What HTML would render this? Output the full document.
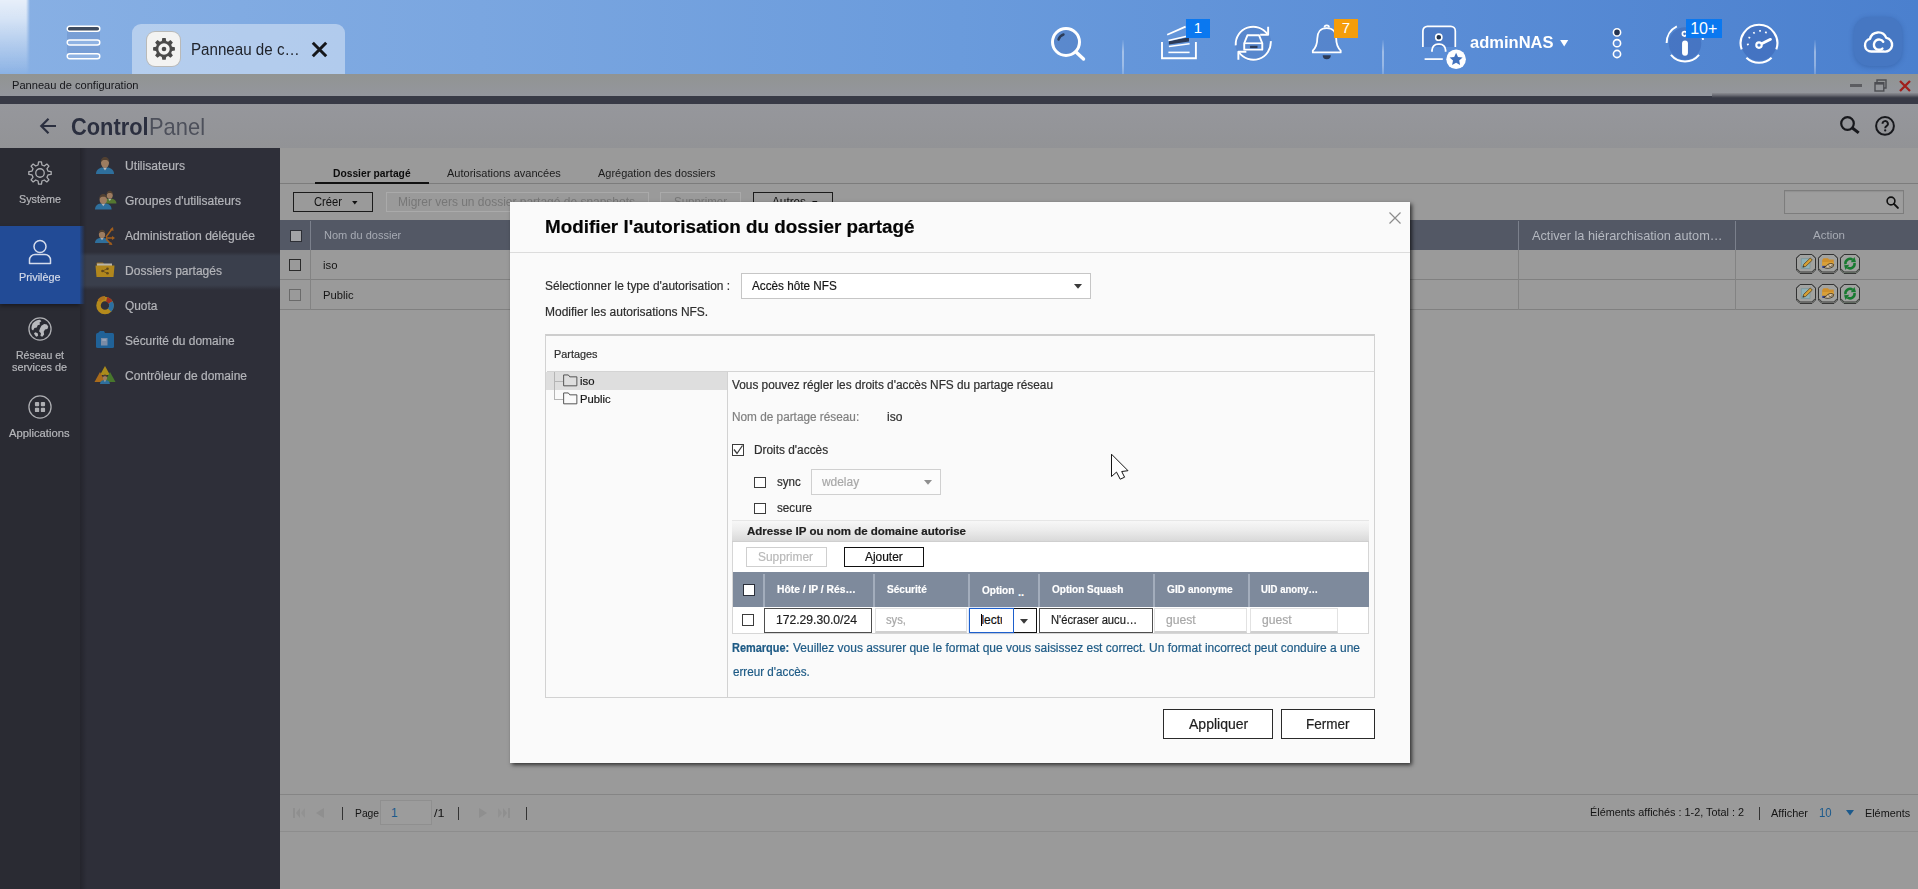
<!DOCTYPE html>
<html lang="fr">
<head>
<meta charset="utf-8">
<title>Panneau de configuration</title>
<style>
*{box-sizing:border-box;margin:0;padding:0}
html,body{width:1918px;height:889px;overflow:hidden;background:#9a9a9a}
body{position:relative;font-family:"Liberation Sans",sans-serif;font-size:12px;color:#222}
.a{position:absolute}
.t{position:absolute;white-space:nowrap;line-height:20px;height:20px}
[id^="m"].t{margin-left:-.6px;-webkit-text-stroke:.2px currentColor}
svg{position:absolute;overflow:visible}
/* top bar */
#topbar{left:0;top:0;width:1918px;height:74px;background:linear-gradient(90deg,#88b0e4 0%,#7aa6e0 25%,#6a9bdc 50%,#5a8dd6 75%,#4b80ce 100%)}
#topglow{left:0;top:0;width:31px;height:74px;background:linear-gradient(180deg,rgba(255,255,255,.80) 0%,rgba(255,255,255,.66) 25%,rgba(255,255,255,.36) 60%,rgba(255,255,255,.10) 92%,rgba(255,255,255,.02) 100%);-webkit-mask-image:linear-gradient(90deg,#000 0,#000 26px,transparent 30px);mask-image:linear-gradient(90deg,#000 0,#000 26px,transparent 30px)}
#tab{left:132px;top:24px;width:213px;height:50px;background:rgba(255,255,255,.40);border-radius:9px 9px 0 0}
#gearbox{left:147px;top:32px;width:33px;height:34px;background:#f3f3f2;border-radius:8px;box-shadow:0 0 0 1px rgba(190,170,140,.55)}
.sep{position:absolute;width:2px;top:40px;height:34px;background:linear-gradient(180deg,rgba(255,255,255,.03),rgba(255,255,255,.42) 35%,rgba(255,255,255,.36) 75%,rgba(255,255,255,.2))}
.badge{position:absolute;top:19.300px;height:18.400px;color:#fff;font-size:15px;line-height:18.400px;text-align:center}
#cloudbtn{left:1854px;top:17px;width:48px;height:49px;border-radius:15px;background:#4677c2;box-shadow:0 1px 5px rgba(30,60,120,.35)}
/* window */
#titlebar{left:0;top:74px;width:1918px;height:22px;background:linear-gradient(180deg,#919492,#94969d)}
#darkbar{left:0;top:96px;width:1918px;height:8px;background:#383a46}
#header{left:0;top:104px;width:1918px;height:44px;background:linear-gradient(180deg,#96979c,#929396)}
#side1{left:0;top:148px;width:80px;height:741px;background:#2a2b33}
#side1sel{left:0;top:226px;width:80px;height:78px;background:#224b96;box-shadow:0 2px 4px rgba(0,0,0,.4)}
#side1fade{left:80px;top:226px;width:5px;height:78px;background:linear-gradient(90deg,rgba(34,75,150,.85),rgba(34,75,150,0))}
#side2sh{left:80px;top:148px;width:7px;height:741px;background:linear-gradient(90deg,rgba(0,0,0,.22),rgba(0,0,0,0))}
#side2{left:80px;top:148px;width:200px;height:741px;background:#2e2f39}
#side2sel{left:80px;top:252px;width:200px;height:38px;background:linear-gradient(180deg,rgba(58,63,76,0) 0,#3a3f4c 4px,#3a3f4c 33px,rgba(58,63,76,0) 38px)}
#content{left:280px;top:148px;width:1638px;height:741px;background:#9a9a9a}
.s1{color:#b6b7bb;font-size:11px;margin-left:-.35px;-webkit-text-stroke:.2px currentColor}
.s2{color:#b3b4b9;font-size:12px;left:125px;margin-left:-.35px;-webkit-text-stroke:.2px currentColor}
/* modal */
#modal{left:510px;top:202px;width:900px;height:561px;background:#fafafa;box-shadow:1.500px 2px 4px 0 rgba(0,0,0,.68)}
/*FIT*/
#tabtxt{transform:scaleX(0.9464);transform-origin:0 50%}
#wtitle{transform:scaleX(1.0088);transform-origin:0 50%}
#hcontrol{transform:scaleX(0.9096);transform-origin:0 50%}
#hpanel{transform:scaleX(0.9122);transform-origin:0 50%}
#s1a{transform:scaleX(0.9814);transform-origin:0 50%}
#s1b{transform:scaleX(0.9861);transform-origin:0 50%}
#s1c{transform:scaleX(0.9570);transform-origin:0 50%}
#s1d{transform:scaleX(0.9885);transform-origin:0 50%}
#s1e{transform:scaleX(1.0198);transform-origin:0 50%}
#s2a{transform:scaleX(1.0108);transform-origin:0 50%}
#s2b{transform:scaleX(1.0027);transform-origin:0 50%}
#s2c{transform:scaleX(1.0097);transform-origin:0 50%}
#s2d{transform:scaleX(1.0029);transform-origin:0 50%}
#s2e{transform:scaleX(0.9907);transform-origin:0 50%}
#s2f{transform:scaleX(0.9966);transform-origin:0 50%}
#s2g{transform:scaleX(0.9994);transform-origin:0 50%}
#tb1{transform:scaleX(0.9332);transform-origin:0 50%}
#tb2{transform:scaleX(1.0006);transform-origin:0 50%}
#tb3{transform:scaleX(0.9965);transform-origin:0 50%}
#bt1{transform:scaleX(0.9328);transform-origin:0 50%}
#bt2{transform:scaleX(0.9980);transform-origin:0 50%}
#bt3{transform:scaleX(0.9574);transform-origin:0 50%}
#bt4{transform:scaleX(0.9802);transform-origin:0 50%}
#gh1{transform:scaleX(1.0020);transform-origin:0 50%}
#gh2{transform:scaleX(0.9801);transform-origin:0 50%}
#gh3{transform:scaleX(1.0465);transform-origin:0 50%}
#gr1{transform:scaleX(1.0311);transform-origin:0 50%}
#gr2{transform:scaleX(1.0177);transform-origin:0 50%}
#pg1{transform:scaleX(0.9376);transform-origin:0 50%}
#pg3{transform:scaleX(1.1429);transform-origin:0 50%}
#pg4{transform:scaleX(0.9870);transform-origin:0 50%}
#pg5{transform:scaleX(0.9975);transform-origin:0 50%}
#pg6{transform:scaleX(0.9506);transform-origin:0 50%}
#pg7{transform:scaleX(0.9834);transform-origin:0 50%}
#mt{transform:scaleX(0.9810);transform-origin:0 50%}
#ml1{transform:scaleX(0.9925);transform-origin:0 50%}
#ml2{transform:scaleX(0.9769);transform-origin:0 50%}
#ml3{transform:scaleX(0.9987);transform-origin:0 50%}
#mp{transform:scaleX(0.9879);transform-origin:0 50%}
#mtr1{transform:scaleX(1.0311);transform-origin:0 50%}
#mtr2{transform:scaleX(1.0177);transform-origin:0 50%}
#mf1{transform:scaleX(0.9852);transform-origin:0 50%}
#mf2{transform:scaleX(0.9828);transform-origin:0 50%}
#mf3{transform:scaleX(1.0037);transform-origin:0 50%}
#mf4{transform:scaleX(0.9882);transform-origin:0 50%}
#mf5{transform:scaleX(0.9641);transform-origin:0 50%}
#mf6{transform:scaleX(0.9931);transform-origin:0 50%}
#mf7{transform:scaleX(0.9742);transform-origin:0 50%}
#mg0{transform:scaleX(1.0455);transform-origin:0 50%}
#mg1{transform:scaleX(0.9953);transform-origin:0 50%}
#mg2{transform:scaleX(0.9939);transform-origin:0 50%}
#mh1{transform:scaleX(0.9352);transform-origin:0 50%}
#mh2{transform:scaleX(0.9166);transform-origin:0 50%}
#mh3{transform:scaleX(0.9115);transform-origin:0 50%}
#mh4{transform:scaleX(0.9114);transform-origin:0 50%}
#mh5{transform:scaleX(0.9252);transform-origin:0 50%}
#mh6{transform:scaleX(0.8715);transform-origin:0 50%}
#md1{transform:scaleX(1.0103);transform-origin:0 50%}
#md2{transform:scaleX(0.9370);transform-origin:0 50%}
#md4{transform:scaleX(0.9325);transform-origin:0 50%}
#md5{transform:scaleX(1.0116);transform-origin:0 50%}
#md6{transform:scaleX(1.0116);transform-origin:0 50%}
#mn1{transform:scaleX(0.9109);transform-origin:0 50%}
#mn2{transform:scaleX(0.9977);transform-origin:0 50%}
#mn3{transform:scaleX(0.9722);transform-origin:0 50%}
#mb1{transform:scaleX(1.0007);transform-origin:0 50%}
#mb2{transform:scaleX(0.9662);transform-origin:0 50%}
#adm{transform:scaleX(0.9713);transform-origin:0 50%}
/*ENDFIT*/
</style>
</head>
<body>
<!-- ===== TOP BAR ===== -->
<div id="topbar" class="a"></div>
<div id="topglow" class="a"></div>
<div id="tab" class="a"></div>
<div id="gearbox" class="a"></div>
<span id="tabtxt" class="t" style="left:191.300px;top:39.500px;font-size:16px;color:#20242c">Panneau de c…</span>

<!-- hamburger -->
<svg style="left:65.500px;top:24.500px" width="35" height="35" viewBox="0 0 35 35">
<rect x="1" y="3" width="33" height="28" fill="rgba(60,90,150,.18)"/>
<rect x="1.200" y="1.200" width="32.600" height="5" rx="2.500" fill="#3f4c60" stroke="#fff" stroke-width="1.400"/>
<rect x="1.200" y="15" width="32.600" height="5" rx="2.500" fill="#8fb2e2" stroke="#fff" stroke-width="1.400"/>
<rect x="1.200" y="28.800" width="32.600" height="5" rx="2.500" fill="#8fb2e2" stroke="#fff" stroke-width="1.400"/>
</svg>
<!-- gear in tab -->
<svg style="left:152px;top:37px" width="24" height="24" viewBox="0 0 24 24"><path fill="#4a4a4a" fill-rule="evenodd" d="M10.300 1h3.400l.5 2.900 1.900.8 2.400-1.700 2.400 2.400-1.700 2.400.8 1.900 2.900.5v3.400l-2.900.5-.8 1.900 1.700 2.400-2.400 2.400-2.400-1.700-1.900.8-.5 2.900h-3.400l-.5-2.900-1.900-.8-2.400 1.700-2.400-2.400 1.700-2.400-.8-1.900-2.900-.5v-3.400l2.900-.5.8-1.900-1.700-2.400 2.400-2.400 2.400 1.700 1.900-.8zM12 6.300a5.700 5.700 0 1 0 0 11.400 5.700 5.700 0 0 0 0-11.400z"/><circle cx="12" cy="12" r="2.300" fill="#4a4a4a"/></svg>
<!-- tab close -->
<svg style="left:311px;top:41px" width="17" height="17" viewBox="0 0 17 17" stroke="#14161a" stroke-width="3" stroke-linecap="butt"><path d="M1.800 1.800l13.400 13.400M15.200 1.800l-13.400 13.400"/></svg>
<!-- search -->
<svg style="left:1049px;top:25px" width="38" height="38" viewBox="0 0 38 38" fill="none"><circle cx="17" cy="17" r="13.500" fill="rgba(70,110,180,.35)" stroke="#fff" stroke-width="3"/><path d="M27 27l7.500 7" stroke="#fff" stroke-width="3.400" stroke-linecap="round"/><path d="M9.500 14.500a8 8 0 0 1 5-5" stroke="#2c3c58" stroke-width="2.400" stroke-linecap="round"/></svg>
<div class="sep" style="left:1122px"></div>
<!-- tasks -->
<svg style="left:1159px;top:26px" width="40" height="36" viewBox="0 0 40 36" fill="none" stroke="#fff" stroke-width="1.900"><path d="M3 16.100v16.100h33.900v-16.100"/><path d="M8.200 8.700l18.400-8.100" stroke-width="1.800"/><path d="M9.900 15.200l20.100-3.900v4.300l-20.100 2.900z" fill="#2b3a57" stroke="none"/><path d="M9.400 14.400l20.600-4.700" stroke-width="1.500"/><path d="M9.900 20.400l20.700-2.700" stroke-width="1.500"/><path d="M9.400 26.400h21.200" stroke-width="1.600"/></svg>
<div class="badge" style="left:1186px;width:24px;background:#0a78f0">1</div>
<!-- sync -->
<svg style="left:1231.800px;top:22px" width="42.500" height="42.500" viewBox="0 0 40 40" fill="none" stroke="#fff" stroke-width="1.800"><circle cx="20" cy="20" r="17" fill="rgba(70,110,180,.30)" stroke="none"/><path d="M3.500 22a16.500 16.500 0 0 1 30-10.500"/><path d="M36.500 18a16.500 16.500 0 0 1-30 10.500"/><path d="M34 4.500v7.500h-7.500" stroke-linejoin="round"/><path d="M6 35.500v-7.500h7.500" stroke-linejoin="round"/><path d="M11.500 20l3-7.500h11l3 7.500v6h-17z" stroke-width="1.800" stroke-linejoin="round"/><path d="M11.500 20h17" stroke-width="1.600"/><path d="M17 23.500h7" stroke="#2b3a57" stroke-width="2.200"/></svg>
<!-- bell -->
<svg style="left:1310.500px;top:25px" width="32.400" height="36" viewBox="0 0 36 40" fill="none" stroke="#fff" stroke-width="2"><path d="M17.500 3.500c-7 0-10.500 5-10.500 11.500 0 8-2.500 11-5 13.500v2h31v-2c-2.500-2.500-5-5.500-5-13.500 0-6.500-3.500-11.500-10.500-11.500z" fill="rgba(70,110,180,.30)" stroke-linejoin="round"/><path d="M13 33.500a4.500 4.500 0 0 0 9 0z" fill="#2b3a57" stroke="none"/><path d="M15 2.800a2.500 2.500 0 0 1 5 0"/></svg>
<div class="badge" style="left:1334px;width:24px;background:#f59d0a">7</div>
<div class="sep" style="left:1382px"></div>
<!-- user -->
<svg style="left:1420px;top:24px" width="48" height="48" viewBox="0 0 48 48" fill="none" stroke="#fff" stroke-width="1.700"><path d="M2.900 22.900v-16a4.500 4.500 0 0 1 4.500-4.500h23.400a4.500 4.500 0 0 1 4.500 4.500v16" fill="rgba(60,100,175,.38)"/><path d="M4.600 35.100h18.200"/><circle cx="18.800" cy="13.200" r="3.100" fill="#22324a" stroke-width="1.600"/><path d="M12 27.800v-1.600a6 6 0 0 1 6-6h1.600a6 6 0 0 1 6 6v1.600" stroke-width="1.800"/><circle cx="36.100" cy="35.300" r="9.800" fill="#fff" stroke="none"/><path d="M36.100 28.800l1.900 4.200 4.600.5-3.400 3.100.9 4.500-4-2.300-4 2.300.9-4.500-3.400-3.100 4.600-.5z" fill="#4272bd" stroke="none"/></svg>
<span id="adm" class="t" style="left:1470.300px;top:31.200px;font-size:17px;line-height:24px;height:24px;font-weight:bold;color:#fff">adminNAS</span>
<svg style="left:1559.600px;top:39.500px" width="8.400" height="6.500" viewBox="0 0 10 8"><path d="M0 0h10l-5 8z" fill="#fff"/></svg>
<!-- dots -->
<svg style="left:1611px;top:27px" width="12" height="32" viewBox="0 0 12 32" stroke="#fff" stroke-width="1.600"><circle cx="6" cy="5.400" r="3.600" fill="#243350"/><circle cx="6" cy="16.200" r="3.600" fill="#5b8bd4"/><circle cx="6" cy="27" r="3.600" fill="#5b8bd4"/></svg>
<!-- info -->
<svg style="left:1663.800px;top:22.200px" width="42" height="42" viewBox="0 0 40 40" fill="none" stroke="#fff" stroke-width="1.900"><circle cx="20" cy="20.500" r="15.500" fill="rgba(50,90,170,.36)" stroke="none"/><path d="M12.200 4.200a17.500 17.500 0 0 0-9.700 15.800"/><path d="M6.600 31.300a17.500 17.500 0 0 0 26.800 0"/><path d="M37.300 17a17.500 17.500 0 0 0-1.300-4"/><circle cx="19.600" cy="11.300" r="2.100" stroke-width="1.600"/><rect x="17.200" y="17.600" width="5.600" height="14.600" rx="2.800" fill="#fff" stroke="none"/></svg>
<div class="badge" style="left:1685.500px;width:36.500px;background:#0a78f0;font-size:16px;line-height:20px">10+</div>
<!-- gauge -->
<svg style="left:1738px;top:22.200px" width="42" height="42" viewBox="0 0 40 40" fill="none" stroke="#fff" stroke-width="2"><circle cx="20" cy="20" r="17" fill="rgba(50,90,170,.38)" stroke="none"/><path d="M3.500 26a17.500 17.500 0 1 1 33 0"/><path d="M8 34a17.500 17.500 0 0 0 24 0"/><path d="M21 21.500l10-5" stroke-width="2.600" stroke-linecap="round"/><circle cx="20" cy="22" r="2.600" fill="#4a7bc8"/><g stroke-width="1.600"><path d="M8.500 21.500l1.800-.3M10 14.500l1.600.8M14.800 9.600l.9 1.500M21 7.500v1.800M27 9.200l-.8 1.500"/></g></svg>
<div class="sep" style="left:1814px"></div>
<!-- cloud -->
<div id="cloudbtn" class="a"></div>
<svg style="left:1860.800px;top:31px" width="32.500" height="24" viewBox="0 0 34 28" fill="none" stroke="#fff" stroke-width="2.800" stroke-linecap="round" stroke-linejoin="round"><path d="M25 24h-15a7.500 7.500 0 0 1-1.500-14.800a10 10 0 0 1 19-1.200a8 8 0 0 1-2.500 16z"/><path d="M24 12.500a6 6 0 1 0-1 8"/></svg>
<!-- ===== WINDOW ===== -->
<div id="titlebar" class="a"></div>
<span id="wtitle" class="t" style="left:12.400px;top:75px;font-size:11px;color:#15161a">Panneau de configuration</span>
<div id="darkbar" class="a"></div>
<div id="header" class="a"></div>
<span id="hcontrol" class="t" style="left:70.700px;top:111.800px;font-size:24px;line-height:30px;height:30px;font-weight:bold;color:#2b2f3f">Control</span>
<span id="hpanel" class="t" style="left:149.200px;top:111.800px;font-size:24px;line-height:30px;height:30px;color:#4d505b">Panel</span>

<svg style="left:39px;top:117px" width="18" height="18" viewBox="0 0 18 18" fill="none" stroke="#2b2f3f" stroke-width="2.200" stroke-linecap="butt" stroke-linejoin="miter"><path d="M17 9h-14.500M9.500 1.800l-7.200 7.200 7.200 7.200"/></svg>
<svg style="left:1839px;top:115px" width="22" height="22" viewBox="0 0 22 22" fill="none" stroke="#17181c" stroke-width="2.200"><circle cx="8.500" cy="8.500" r="6.300"/><path d="M13.400 13l6.300 4.900" stroke-width="3" stroke-linecap="butt"/></svg>
<svg style="left:1874px;top:115px" width="22" height="22" viewBox="0 0 22 22" fill="none" stroke="#17181c" stroke-width="2"><circle cx="11" cy="10.900" r="8.900"/><g transform="translate(11.200 11.200) scale(.84) translate(-11 -11.400)"><path d="M7.800 8.500a3.200 3.200 0 1 1 4.700 2.800c-1 .6-1.500 1.200-1.500 2.500" stroke-width="2.300"/><circle cx="11" cy="16.500" r="1.350" fill="#17181c" stroke="none"/></g></svg>

<!-- window controls -->
<div class="a" style="left:1850px;top:84px;width:12px;height:2.500px;background:#5c5d61"></div>
<svg style="left:1874px;top:79px" width="13" height="13" viewBox="0 0 13 13" fill="none" stroke="#4c4d52"><path d="M3 3v-2h9v8h-2" stroke-width="1.400"/><rect x="1" y="3.700" width="8.800" height="8.300" stroke-width="1.400"/><path d="M1 4.500h8.800" stroke-width="2.200"/></svg>
<svg style="left:1899px;top:80px" width="12" height="12" viewBox="0 0 12 12" stroke="#a11f1c" stroke-width="2.300"><path d="M1 1l10 10M11 1l-10 10"/></svg>
<div class="a" style="left:1712px;top:93px;width:206px;height:5px;background:linear-gradient(180deg,#8b8c91,#6a6b74 45%,#464852 80%,#383a46)"></div>

<div id="side1" class="a"></div>
<div id="side1sel" class="a"></div>
<div id="side2" class="a"></div>
<div id="side2sel" class="a"></div>
<div id="side2sh" class="a"></div>
<div id="side1fade" class="a"></div>
<div id="content" class="a"></div>

<!-- sidebar 1 -->
<svg id="ic-sys" style="left:28px;top:160.700px" width="24" height="24" viewBox="0 0 26 26" fill="none" stroke="#adaeb2" stroke-width="1.400" stroke-linejoin="round"><path d="M10.92 4.35L11.41 0.90L14.59 0.90L15.08 4.35L17.65 5.41L20.43 3.32L22.68 5.57L20.59 8.35L21.65 10.92L25.10 11.41L25.10 14.59L21.65 15.08L20.59 17.65L22.68 20.43L20.43 22.68L17.65 20.59L15.08 21.65L14.59 25.10L11.41 25.10L10.92 21.65L8.35 20.59L5.57 22.68L3.32 20.43L5.41 17.65L4.35 15.08L0.90 14.59L0.90 11.41L4.35 10.92L5.41 8.35L3.32 5.57L5.57 3.32L8.35 5.41Z"/><circle cx="13" cy="13" r="4.600"/></svg>
<span id="s1a" class="t s1" style="left:19px;top:189px">Système</span>
<svg id="ic-priv" style="left:28px;top:239px" width="24" height="26" viewBox="0 0 24 26" fill="none" stroke="#d5dcec" stroke-width="1.5"><circle cx="12" cy="7.5" r="6"/><path d="M1.5 24.500v-3.500a5.500 5.500 0 0 1 5.500-5.500h10a5.500 5.500 0 0 1 5.500 5.500v3.500z" stroke-linejoin="round"/></svg>
<span id="s1b" class="t s1" style="left:19px;top:267px;color:#d3d9e8">Privilège</span>
<svg id="ic-net" style="left:28px;top:316.500px" width="24" height="24" viewBox="0 0 26 26"><circle cx="13" cy="13" r="12" fill="none" stroke="#adaeb2" stroke-width="1.400"/><path d="M5 7c2-2.500 5-4 8-4l1.500 1.500-2 1.500.5 2-2.500 1-1 2.500-2.500.5-1.500 2.500-1.500-1c-.5-2 0-4.500 1-6.500zM14.500 9.500l3-2 3 .5 1.500 2.500-1 2.500-2.500.5-1.500 2.500.500 3-2 2.500-2-1 .5-3-2-2 1-3zM8 16.500l2.500 1 .500 2.500-1.500 1.500c-1.500-1-2.500-2.500-3-4z" fill="#b8b9bd"/></svg>
<span id="s1c" class="t s1" style="left:16px;top:345px">Réseau et</span>
<span id="s1d" class="t s1" style="left:12.500px;top:357px">services de</span>
<svg id="ic-app" style="left:28px;top:395px" width="24" height="24" viewBox="0 0 26 26"><circle cx="13" cy="13" r="12" fill="none" stroke="#adaeb2" stroke-width="1.400"/><rect x="7.500" y="7.500" width="4.600" height="4.600" rx="1" fill="#adaeb2"/><rect x="13.900" y="7.500" width="4.600" height="4.600" rx="1" fill="#adaeb2"/><rect x="7.500" y="13.900" width="4.600" height="4.600" rx="1" fill="#adaeb2"/><rect x="13.900" y="13.900" width="4.600" height="4.600" rx="1" fill="#adaeb2"/></svg>
<span id="s1e" class="t s1" style="left:9.700px;top:423px">Applications</span>
<!-- sidebar 2 -->
<span id="s2a" class="t s2" style="top:156px">Utilisateurs</span>
<span id="s2b" class="t s2" style="top:191px">Groupes d'utilisateurs</span>
<span id="s2c" class="t s2" style="top:226px">Administration déléguée</span>
<span id="s2d" class="t s2" style="top:261px">Dossiers partagés</span>
<span id="s2e" class="t s2" style="top:296px">Quota</span>
<span id="s2f" class="t s2" style="top:331px">Sécurité du domaine</span>
<span id="s2g" class="t s2" style="top:366px">Contrôleur de domaine</span>

<svg style="opacity:.8;left:95px;top:155px" width="20" height="20" viewBox="0 0 20 20"><g transform="translate(1,1) scale(1.0)"><path d="M0 18c0-4 3-6 6-6.500h6c3 .500 6 2.500 6 6.500z" fill="#2f7fb5"/><path d="M7 11.500l2 3 2-3z" fill="#d8d8d8"/><ellipse cx="9" cy="7" rx="4" ry="4.800" fill="#b9906a"/><path d="M4.800 6.500c0-4 2-5.500 4.200-5.500s4.200 1.500 4.200 5.500c-1-2-2-2.500-4.200-2.500s-3.200.500-4.200 2.500z" fill="#5a4530"/></g></svg>
<svg style="opacity:.8;left:95px;top:190px" width="20" height="20" viewBox="0 0 20 20"><g transform="translate(8,0) scale(0.75)"><path d="M0 18c0-4 3-6 6-6.500h6c3 .500 6 2.500 6 6.500z" fill="#5f8a2e"/><path d="M7 11.500l2 3 2-3z" fill="#d8d8d8"/><ellipse cx="9" cy="7" rx="4" ry="4.800" fill="#b9906a"/><path d="M4.800 6.500c0-4 2-5.500 4.200-5.500s4.200 1.500 4.200 5.500c-1-2-2-2.500-4.200-2.500s-3.200.500-4.200 2.500z" fill="#5a4530"/></g><g transform="translate(0,3) scale(0.92)"><path d="M0 18c0-4 3-6 6-6.500h6c3 .500 6 2.500 6 6.500z" fill="#2f7fb5"/><path d="M7 11.500l2 3 2-3z" fill="#d8d8d8"/><ellipse cx="9" cy="7" rx="4" ry="4.800" fill="#b9906a"/><path d="M4.800 6.500c0-4 2-5.500 4.200-5.500s4.200 1.500 4.200 5.500c-1-2-2-2.500-4.200-2.500s-3.200.500-4.200 2.500z" fill="#5a4530"/></g></svg>
<svg style="opacity:.8;left:95px;top:225px" width="20" height="20" viewBox="0 0 20 20"><g transform="translate(0,4) scale(0.78)"><path d="M0 18c0-4 3-6 6-6.500h6c3 .500 6 2.500 6 6.500z" fill="#2f7fb5"/><path d="M7 11.500l2 3 2-3z" fill="#d8d8d8"/><ellipse cx="9" cy="7" rx="4" ry="4.800" fill="#b9906a"/><path d="M4.800 6.500c0-4 2-5.500 4.200-5.500s4.200 1.500 4.200 5.500c-1-2-2-2.500-4.200-2.500s-3.200.500-4.200 2.500z" fill="#5a4530"/></g><g stroke="#c06a14" stroke-width="1.5" fill="none"><path d="M11 12l6-8M11 13h7M11 14l5 5"/></g><path d="M18 2l.500 4-3.500-1.500zM20 13l-3 2v-4zM17.500 20l-4-.500 2.500-2.500z" fill="#c06a14"/></svg>
<svg style="opacity:.8;left:95px;top:260px" width="20" height="20" viewBox="0 0 20 20"><path d="M1 4.500l1-2h6l1.500 2z" fill="#a8781a"/><rect x="2" y="3.500" width="15" height="4" fill="#d9d2c0"/><path d="M.5 5.500h19l-1 11.500h-17z" fill="#cf9a12"/><g fill="#6a4a10"><circle cx="7.500" cy="11" r="1.300"/><circle cx="12.500" cy="8.700" r="1.300"/><circle cx="12.500" cy="13.300" r="1.300"/></g><path d="M7.500 11l5-2.300M7.500 11l5 2.300" stroke="#6a4a10" stroke-width=".8"/></svg>
<svg style="opacity:.8;left:95px;top:295px" width="20" height="20" viewBox="0 0 20 20"><circle cx="10" cy="10.500" r="6.500" fill="none" stroke="#d6a116" stroke-width="4.500"/><path d="M3.900 5.900a7.600 7.600 0 0 1 6.100-3.100" fill="none" stroke="#cf8418" stroke-width="3.400"/><path d="M12.250 2.100A8.700 8.700 0 0 1 17.530 6.150L13.640 8.400A4.200 4.200 0 0 0 11.090 6.440Z" fill="#b8301f"/><path d="M17.530 6.150A8.700 8.700 0 0 1 16.150 16.650L12.970 13.470A4.200 4.200 0 0 0 13.640 8.400Z" fill="#2b7fbd"/></svg>
<svg style="opacity:.8;left:95px;top:330px" width="20" height="20" viewBox="0 0 20 20"><rect x="1" y="3" width="18" height="15" rx="1.500" fill="#1d6fb0"/><path d="M3 3l2-2h4l1 2z" fill="#1d6fb0"/><rect x="6" y="8" width="6.500" height="7.500" fill="#8fa4c2"/><rect x="7.200" y="9.500" width="4" height="1" fill="#d0d8e6"/></svg>
<svg style="opacity:.8;left:95px;top:365px" width="20" height="20" viewBox="0 0 20 20"><path d="M10 1l5 9h-10z" fill="#c9a214"/><path d="M5 7l5.500 10h-11z" fill="#c87a14"/><path d="M15 7l5.500 10h-11z" fill="#4f8a2a"/><g transform="translate(5,9) scale(0.55)"><path d="M0 18c0-4 3-6 6-6.500h6c3 .500 6 2.500 6 6.500z" fill="#2f7fb5"/><path d="M7 11.500l2 3 2-3z" fill="#d8d8d8"/><ellipse cx="9" cy="7" rx="4" ry="4.800" fill="#b9906a"/><path d="M4.800 6.500c0-4 2-5.500 4.200-5.500s4.200 1.500 4.200 5.500c-1-2-2-2.500-4.200-2.500s-3.200.500-4.200 2.500z" fill="#5a4530"/></g></svg>



<!-- tabs -->
<span id="tb1" class="t" style="left:333.300px;top:163px;font-size:11px;font-weight:bold;color:#0c0c0c">Dossier partagé</span>
<span id="tb2" class="t" style="left:447.400px;top:163px;font-size:11px;color:#1c1c1c">Autorisations avancées</span>
<span id="tb3" class="t" style="left:597.800px;top:163px;font-size:11px;color:#1c1c1c">Agrégation des dossiers</span>
<div class="a" style="left:280px;top:183px;width:1638px;height:1px;background:#7c7c7c"></div>
<div class="a" style="left:315px;top:181.500px;width:114px;height:2px;background:#111"></div>
<!-- toolbar -->
<div class="a" style="left:293px;top:192px;width:80px;height:20px;border:1px solid #1b1b1b"></div>
<span id="bt1" class="t" style="left:314px;top:191.500px;font-size:12px;color:#111">Créer</span>
<svg style="left:351.500px;top:200.800px" width="5.600" height="3.400" viewBox="0 0 8 5"><path d="M0 0h8l-4 5z" fill="#111"/></svg>
<div class="a" style="left:385.500px;top:192px;width:263px;height:20px;border:1px solid #aaa"></div>
<span id="bt2" class="t" style="left:398.300px;top:191.500px;font-size:12px;color:#777">Migrer vers un dossier partagé de snapshots</span>
<div class="a" style="left:660px;top:192px;width:81px;height:20px;border:1px solid #aaa"></div>
<span id="bt3" class="t" style="left:674px;top:191.500px;font-size:12px;color:#777">Supprimer</span>
<div class="a" style="left:753px;top:192px;width:80px;height:20px;border:1px solid #1b1b1b"></div>
<span id="bt4" class="t" style="left:771.500px;top:191.500px;font-size:12px;color:#111">Autres</span>
<svg style="left:812px;top:200.800px" width="5.600" height="3.400" viewBox="0 0 8 5"><path d="M0 0h8l-4 5z" fill="#111"/></svg>
<!-- search -->
<div class="a" style="left:1784px;top:190px;width:120px;height:23.500px;border:1px solid #7d7d7d;background:#9d9d9d;box-shadow:inset 0 1px 1px rgba(0,0,0,.08)"></div>
<svg style="left:1886px;top:196px" width="13" height="13" viewBox="0 0 13 13" fill="none" stroke="#111" stroke-width="1.600"><circle cx="5" cy="5" r="3.900"/><path d="M7.900 7.900l4 4" stroke-width="2" stroke-linecap="round"/></svg>
<!-- grid -->
<div class="a" style="left:280px;top:220px;width:1638px;height:30px;background:#535865"></div>
<div class="a" style="left:280px;top:250px;width:1638px;height:30px;border-bottom:1px solid #808080"></div>
<div class="a" style="left:280px;top:280px;width:1638px;height:30px;border-bottom:1px solid #808080"></div>
<div class="a" style="left:309.500px;top:221px;width:1px;height:29px;background:#7b808c"></div>
<div class="a" style="left:309.500px;top:250px;width:1px;height:60px;background:#838383"></div>
<div class="a" style="left:1518px;top:221px;width:1px;height:29px;background:#7b808c"></div>
<div class="a" style="left:1518px;top:250px;width:1px;height:60px;background:#838383"></div>
<div class="a" style="left:1735px;top:221px;width:1px;height:29px;background:#7b808c"></div>
<div class="a" style="left:1735px;top:250px;width:1px;height:60px;background:#838383"></div>
<div class="a" style="left:290px;top:230px;width:12px;height:12px;background:#a2a3a6;border:1px solid #2d2f36"></div>
<div class="a" style="left:289px;top:259px;width:12px;height:12px;border:1px solid #2a2a2a"></div>
<div class="a" style="left:289px;top:289px;width:12px;height:12px;border:1px solid #6a6a6a"></div>
<span id="gh1" class="t" style="left:324.300px;top:225px;font-size:11px;color:#a7abb4">Nom du dossier</span>
<span id="gh2" class="t" style="left:1532.300px;top:225.500px;font-size:13px;color:#b4b8c0">Activer la hiérarchisation autom…</span>
<span id="gh3" class="t" style="left:1812.800px;top:225px;font-size:11px;color:#a7abb4">Action</span>
<span id="gr1" class="t" style="left:323px;top:255px;font-size:11px;color:#141414">iso</span>
<span id="gr2" class="t" style="left:323px;top:285px;font-size:11px;color:#141414">Public</span>
<svg style="left:1796px;top:253.5px" width="20" height="20" viewBox="0 0 20 20"><path d="M4 .5h12l3.500 3.500v12l-3.500 3.500h-12l-3.500-3.500v-12z" fill="#9d9f9b" stroke="#2c2c2c" stroke-width=".9"/><rect x="5" y="5" width="9" height="10.500" fill="#9fb4c8" stroke="#4a5a6a" stroke-width=".7"/><path d="M7 14l1-3.200 6.500-6.800 2 2-6.500 6.800z" fill="#d9a21e" stroke="#5a4210" stroke-width=".6"/></svg><svg style="left:1818px;top:253.5px" width="20" height="20" viewBox="0 0 20 20"><path d="M4 .5h12l3.500 3.500v12l-3.500 3.500h-12l-3.500-3.500v-12z" fill="#9d9f9b" stroke="#2c2c2c" stroke-width=".9"/><path d="M4 6.500l1.500-2h5l1 1.500h4.500v8h-12z" fill="#d8951a"/><path d="M4 9h12.500v5.500h-12.500z" fill="#e0a52a"/><path d="M4 13.500h9v2.500h-9z" fill="#2a3f9a"/><path d="M9 11.500c2-2 5.500-2 7 0l-1.500 2.500c-1.500-1.500-3-1.500-4 0z" fill="#e8d9c0" stroke="#3a2a10" stroke-width=".6"/></svg><svg style="left:1840px;top:253.5px" width="20" height="20" viewBox="0 0 20 20"><path d="M4 .5h12l3.500 3.500v12l-3.500 3.500h-12l-3.500-3.500v-12z" fill="#8fa08f" stroke="#2c2c2c" stroke-width=".9"/><path d="M4.500 10a5.500 5.500 0 0 1 9-4.200l1.800-1.600v5.500h-5.800l2-1.900a3 3 0 0 0-4.500 2.200z" fill="#127a2c"/><path d="M15.500 10a5.500 5.500 0 0 1-9 4.200l-1.800 1.600v-5.500h5.800l-2 1.900a3 3 0 0 0 4.500-2.200z" fill="#127a2c"/></svg><svg style="left:1796px;top:283.5px" width="20" height="20" viewBox="0 0 20 20"><path d="M4 .5h12l3.500 3.500v12l-3.500 3.500h-12l-3.500-3.500v-12z" fill="#9d9f9b" stroke="#2c2c2c" stroke-width=".9"/><rect x="5" y="5" width="9" height="10.500" fill="#9fb4c8" stroke="#4a5a6a" stroke-width=".7"/><path d="M7 14l1-3.200 6.500-6.800 2 2-6.500 6.800z" fill="#d9a21e" stroke="#5a4210" stroke-width=".6"/></svg><svg style="left:1818px;top:283.5px" width="20" height="20" viewBox="0 0 20 20"><path d="M4 .5h12l3.500 3.500v12l-3.500 3.500h-12l-3.500-3.500v-12z" fill="#9d9f9b" stroke="#2c2c2c" stroke-width=".9"/><path d="M4 6.500l1.500-2h5l1 1.500h4.500v8h-12z" fill="#d8951a"/><path d="M4 9h12.500v5.500h-12.500z" fill="#e0a52a"/><path d="M4 13.500h9v2.500h-9z" fill="#2a3f9a"/><path d="M9 11.500c2-2 5.500-2 7 0l-1.500 2.500c-1.500-1.500-3-1.500-4 0z" fill="#e8d9c0" stroke="#3a2a10" stroke-width=".6"/></svg><svg style="left:1840px;top:283.5px" width="20" height="20" viewBox="0 0 20 20"><path d="M4 .5h12l3.500 3.500v12l-3.500 3.500h-12l-3.500-3.500v-12z" fill="#8fa08f" stroke="#2c2c2c" stroke-width=".9"/><path d="M4.500 10a5.500 5.500 0 0 1 9-4.200l1.800-1.600v5.500h-5.800l2-1.900a3 3 0 0 0-4.500 2.200z" fill="#127a2c"/><path d="M15.500 10a5.500 5.500 0 0 1-9 4.200l-1.800 1.600v-5.500h5.800l-2 1.900a3 3 0 0 0 4.500-2.200z" fill="#127a2c"/></svg>
<svg style="left:1796px;top:254px" width="20" height="19" viewBox="0 0 20 19"><path d="M4.200 .5h11.600l3.700 3.700v10.100l-3.700 3.700h-11.600l-3.700-3.700v-10.100z" fill="#a1a2a0" stroke="#2b2b2b" stroke-width=".9"/><rect x="5.200" y="4.800" width="8.800" height="9.800" fill="#8fb3b8" stroke="#6f8f98" stroke-width=".6"/><path d="M6.800 13.300l.9-3 6.600-6.300 2 2.100-6.600 6.300z" fill="#d6a033" stroke="#4a3a18" stroke-width=".7"/><path d="M6.800 13.300l.6-1.800 1.300 1.300z" fill="#3a3a3a"/></svg><svg style="left:1818px;top:254px" width="20" height="19" viewBox="0 0 20 19"><path d="M4.200 .5h11.600l3.700 3.700v10.100l-3.700 3.700h-11.600l-3.700-3.700v-10.100z" fill="#a1a2a0" stroke="#2b2b2b" stroke-width=".9"/><path d="M4.200 6l1.300-1.800h4.500l1 1.300h4.700v6.500h-11.500z" fill="#cf8f2a"/><path d="M4.200 8h11.500v4.500h-11.500z" fill="#d9a038"/><path d="M4.200 11.800h3.300v2.200h-3.300z" fill="#3548a8"/><path d="M5.500 13.200c2.500 1.500 6.500 1.500 9.300-.3l.9-2.400c-1.800-1.300-4.200-1.300-6 .2l-1.600 1.500z" fill="#dcc9a8" stroke="#2a2218" stroke-width=".8"/><path d="M10.500 11.800l2.200.9 2-1.700" fill="none" stroke="#2a2218" stroke-width=".7"/></svg><svg style="left:1840px;top:254px" width="20" height="19" viewBox="0 0 20 19"><path d="M4.200 .5h11.600l3.700 3.700v10.100l-3.700 3.700h-11.600l-3.700-3.700v-10.100z" fill="#a1a2a0" stroke="#2b2b2b" stroke-width=".9"/><g><path d="M5.470 10.300A4.600 4.600 0 0 1 12.640 5.730" fill="none" stroke="#177a30" stroke-width="2.500"/><path d="M14.480 3.110L15.900 8L10.800 8.350z" fill="#177a30"/></g><g transform="rotate(180 10 9.600)"><path d="M5.470 10.300A4.600 4.600 0 0 1 12.640 5.730" fill="none" stroke="#177a30" stroke-width="2.500"/><path d="M14.480 3.110L15.900 8L10.800 8.350z" fill="#177a30"/></g></svg>
<svg style="left:1796px;top:284px" width="20" height="19" viewBox="0 0 20 19"><path d="M4.200 .5h11.600l3.700 3.700v10.100l-3.700 3.700h-11.600l-3.700-3.700v-10.100z" fill="#a1a2a0" stroke="#2b2b2b" stroke-width=".9"/><rect x="5.200" y="4.800" width="8.800" height="9.800" fill="#8fb3b8" stroke="#6f8f98" stroke-width=".6"/><path d="M6.800 13.300l.9-3 6.600-6.300 2 2.100-6.600 6.300z" fill="#d6a033" stroke="#4a3a18" stroke-width=".7"/><path d="M6.800 13.300l.6-1.800 1.300 1.300z" fill="#3a3a3a"/></svg><svg style="left:1818px;top:284px" width="20" height="19" viewBox="0 0 20 19"><path d="M4.200 .5h11.600l3.700 3.700v10.100l-3.700 3.700h-11.600l-3.700-3.700v-10.100z" fill="#a1a2a0" stroke="#2b2b2b" stroke-width=".9"/><path d="M4.200 6l1.300-1.800h4.500l1 1.300h4.700v6.500h-11.500z" fill="#cf8f2a"/><path d="M4.200 8h11.500v4.500h-11.500z" fill="#d9a038"/><path d="M4.200 11.800h3.300v2.200h-3.300z" fill="#3548a8"/><path d="M5.500 13.200c2.500 1.500 6.500 1.500 9.300-.3l.9-2.400c-1.800-1.300-4.200-1.300-6 .2l-1.600 1.500z" fill="#dcc9a8" stroke="#2a2218" stroke-width=".8"/><path d="M10.500 11.800l2.200.9 2-1.700" fill="none" stroke="#2a2218" stroke-width=".7"/></svg><svg style="left:1840px;top:284px" width="20" height="19" viewBox="0 0 20 19"><path d="M4.200 .5h11.600l3.700 3.700v10.100l-3.700 3.700h-11.600l-3.700-3.700v-10.100z" fill="#a1a2a0" stroke="#2b2b2b" stroke-width=".9"/><g><path d="M5.470 10.300A4.600 4.600 0 0 1 12.640 5.730" fill="none" stroke="#177a30" stroke-width="2.500"/><path d="M14.480 3.110L15.900 8L10.800 8.350z" fill="#177a30"/></g><g transform="rotate(180 10 9.600)"><path d="M5.470 10.300A4.600 4.600 0 0 1 12.640 5.730" fill="none" stroke="#177a30" stroke-width="2.500"/><path d="M14.480 3.110L15.900 8L10.800 8.350z" fill="#177a30"/></g></svg>
<!-- paging -->
<div class="a" style="left:280px;top:793.500px;width:1638px;height:1px;background:#858585"></div>
<div class="a" style="left:280px;top:830.500px;width:1638px;height:1px;background:#8d8d8d"></div>
<svg style="left:293px;top:808px" width="12" height="10" viewBox="0 0 12 10" fill="#8f8f8f"><rect x="0" y="0" width="2" height="10"/><path d="M3 5l4-5v10z"/><path d="M8 5l4-5v10z" opacity=".7"/></svg>
<svg style="left:316px;top:808px" width="9" height="10" viewBox="0 0 9 10" fill="#8f8f8f"><path d="M0 5l8-5v10z"/></svg>
<div class="a" style="left:342px;top:807px;width:1px;height:13px;background:#333"></div>
<span id="pg1" class="t" style="left:355.400px;top:803px;font-size:11px;color:#141414">Page</span>
<div class="a" style="left:380px;top:800px;width:51.500px;height:25px;border:1px solid #8f8f8f;background:#9c9c9c"></div>
<span id="pg2" class="t" style="left:391px;top:802.500px;font-size:12px;color:#1c5a8c">1</span>
<span id="pg3" class="t" style="left:433.500px;top:803px;font-size:11px;color:#141414">/1</span>
<div class="a" style="left:458px;top:807px;width:1px;height:13px;background:#333"></div>
<svg style="left:478px;top:808px" width="9" height="10" viewBox="0 0 9 10" fill="#8f8f8f"><path d="M9 5l-8-5v10z"/></svg>
<svg style="left:498px;top:808px" width="12" height="10" viewBox="0 0 12 10" fill="#8f8f8f"><path d="M4 5l-4-5v10z" opacity=".7"/><path d="M9 5l-4-5v10z"/><rect x="10" y="0" width="2" height="10"/></svg>
<div class="a" style="left:526px;top:807px;width:1px;height:13px;background:#333"></div>
<span id="pg4" class="t" style="left:1590.400px;top:801.800px;font-size:11px;color:#141414">Éléments affichés : 1-2, Total : 2</span>
<div class="a" style="left:1758.500px;top:807px;width:1px;height:13px;background:#333"></div>
<span id="pg5" class="t" style="left:1771px;top:803px;font-size:11px;color:#141414">Afficher</span>
<span id="pg6" class="t" style="left:1819.300px;top:802.500px;font-size:12px;color:#1c5a8c">10</span>
<svg style="left:1846px;top:810px" width="8" height="6" viewBox="0 0 8 6"><path d="M0 0h8l-4 5.500z" fill="#1c5a8c"/></svg>
<span id="pg7" class="t" style="left:1864.600px;top:803px;font-size:11px;color:#141414">Eléments</span>

<!-- ===== MODAL ===== -->
<div id="modal" class="a"></div>

<span id="mt" class="t" style="left:545.700px;top:214.350px;font-size:19.200px;line-height:26px;height:26px;font-weight:bold;color:#050505">Modifier l'autorisation du dossier partagé</span>
<svg style="left:1389px;top:212px" width="12" height="12" viewBox="0 0 12 12" stroke="#8c8c8c" stroke-width="1.200" fill="none"><path d="M.5.500l11 11M11.500.500l-11 11"/></svg>
<div class="a" style="left:510px;top:252px;width:900px;height:1px;background:#dcdcdc"></div>
<span id="ml1" class="t" style="left:545.500px;top:276px;font-size:12px;color:#2e2e2e">Sélectionner le type d'autorisation :</span>
<div class="a" style="left:741px;top:273px;width:350px;height:25.500px;border:1px solid #c6c6c6;background:#fff"></div>
<span id="ml2" class="t" style="left:752.900px;top:276px;font-size:12px;color:#161616">Accès hôte NFS</span>
<svg style="left:1074px;top:284px" width="8" height="5" viewBox="0 0 8 5"><path d="M0 0h8l-4 4.800z" fill="#3a3a3a"/></svg>
<span id="ml3" class="t" style="left:545.500px;top:302px;font-size:12px;color:#2e2e2e">Modifier les autorisations NFS.</span>
<!-- outer panel -->
<div class="a" style="left:545px;top:334px;width:830px;height:363.500px;border:1px solid #d2d2d2;border-top:2px solid #cdcdcd"></div>
<div class="a" style="left:546.500px;top:371px;width:828px;height:1px;background:#d4d4d4"></div>
<span id="mp" class="t" style="left:554.500px;top:343.700px;font-size:11px;color:#2e2e2e">Partages</span>
<!-- tree -->
<div class="a" style="left:546px;top:372px;width:180.500px;height:18px;background:#dedede"></div>
<div class="a" style="left:726.500px;top:372px;width:1px;height:325px;background:#d2d2d2"></div>
<div class="a" style="left:554px;top:372px;width:1px;height:27.500px;background:#b5b5b5"></div>
<div class="a" style="left:554px;top:380.500px;width:9px;height:1px;background:#b5b5b5"></div>
<div class="a" style="left:554px;top:399px;width:9px;height:1px;background:#b5b5b5"></div>
<svg style="left:562.500px;top:374px" width="14.500" height="12.300" viewBox="0 0 15 13" fill="none" stroke="#4c4c4c" stroke-width="1"><path d="M.5 12.500v-11.500h5l1.500 2h7.500v9.500z"/></svg>
<svg style="left:562.500px;top:392px" width="14.500" height="12.300" viewBox="0 0 15 13" fill="none" stroke="#4c4c4c" stroke-width="1"><path d="M.5 12.500v-11.500h5l1.500 2h7.500v9.500z"/></svg>
<span id="mtr1" class="t" style="left:580.700px;top:370.500px;font-size:11px;color:#141414">iso</span>
<span id="mtr2" class="t" style="left:580.500px;top:388.500px;font-size:11px;color:#141414">Public</span>
<!-- right form -->
<span id="mf1" class="t" style="left:732.400px;top:375px;font-size:12px;color:#2e2e2e">Vous pouvez régler les droits d'accès NFS du partage réseau</span>
<span id="mf2" class="t" style="left:732.500px;top:407px;font-size:12px;color:#7f7f7f">Nom de partage réseau:</span>
<span id="mf3" class="t" style="left:887.9px;top:407px;font-size:12px;color:#2e2e2e">iso</span>
<div class="a" style="left:732px;top:444px;width:12px;height:12px;border:1px solid #3c3c3c;background:#fff"></div>
<svg style="left:733px;top:445px" width="10" height="10" viewBox="0 0 10 10" fill="none" stroke="#3c3c3c" stroke-width="1.300"><path d="M1 4.500l3 4 5.500-8"/></svg>
<span id="mf4" class="t" style="left:754.400px;top:440px;font-size:12px;color:#2e2e2e">Droits d'accès</span>
<div class="a" style="left:754px;top:476.500px;width:12px;height:11.500px;border:1px solid #3c3c3c;background:#fff"></div>
<span id="mf5" class="t" style="left:777.3px;top:472px;font-size:12px;color:#2e2e2e">sync</span>
<div class="a" style="left:811px;top:469px;width:129.500px;height:25.500px;border:1px solid #d0d0d0;background:#fcfcfc"></div>
<span id="mf6" class="t" style="left:822.6px;top:472px;font-size:12px;color:#a8a8a8">wdelay</span>
<svg style="left:924px;top:480px" width="8" height="5" viewBox="0 0 8 5"><path d="M0 0h8l-4 4.800z" fill="#8f8f8f"/></svg>
<div class="a" style="left:754px;top:502.500px;width:12px;height:11.500px;border:1px solid #3c3c3c;background:#fff"></div>
<span id="mf7" class="t" style="left:777.3px;top:498px;font-size:12px;color:#2e2e2e">secure</span>
<!-- inner grid panel -->
<div class="a" style="left:732px;top:519.500px;width:637px;height:22px;background:linear-gradient(180deg,#f7f7f7 0%,#ececec 45%,#d9d9d9 100%);border-top:1px solid #e6e6e6;border-bottom:1px solid #cfcfcf"></div>
<span id="mg0" class="t" style="left:747.400px;top:520.500px;font-size:11px;font-weight:bold;color:#202020">Adresse IP ou nom de domaine autorise</span>
<div class="a" style="left:732px;top:541.500px;width:637px;height:92px;background:#fff;border:1px solid #d6d6d6;border-top:none"></div>
<div class="a" style="left:746px;top:547px;width:81px;height:19.500px;border:1px solid #cfcfcf"></div>
<span id="mg1" class="t" style="left:758.900px;top:546.500px;font-size:12px;color:#b9b9b9">Supprimer</span>
<div class="a" style="left:844px;top:547px;width:80px;height:19.500px;border:1.500px solid #111"></div>
<span id="mg2" class="t" style="left:865.200px;top:546.500px;font-size:12px;color:#111">Ajouter</span>
<div class="a" style="left:733px;top:572px;width:635.500px;height:35px;background:#7e8a9c"></div>
<div class="a" style="left:763px;top:574px;width:2px;height:33px;background:#a3adbc"></div>
<div class="a" style="left:873px;top:574px;width:2px;height:33px;background:#a3adbc"></div>
<div class="a" style="left:967.500px;top:574px;width:2px;height:33px;background:#a3adbc"></div>
<div class="a" style="left:1038px;top:574px;width:2px;height:33px;background:#a3adbc"></div>
<div class="a" style="left:1153px;top:574px;width:2px;height:33px;background:#a3adbc"></div>
<div class="a" style="left:1248px;top:574px;width:2px;height:33px;background:#a3adbc"></div>
<div class="a" style="left:743px;top:584px;width:12px;height:12px;background:#fff;border:1px solid #2a2f3a"></div>
<span id="mh1" class="t" style="left:777.300px;top:579px;font-size:11px;font-weight:bold;color:#fff">Hôte / IP / Rés…</span>
<span id="mh2" class="t" style="left:887.200px;top:579px;font-size:11px;font-weight:bold;color:#fff">Sécurité</span>
<span id="mh3" class="t" style="left:982.300px;top:580px;font-size:11px;font-weight:bold;color:#fff">Option</span>
<span id="mh3b" class="t" style="left:1018.500px;top:581.500px;font-size:11px;font-weight:bold;color:#fff">..</span>
<span id="mh4" class="t" style="left:1052.300px;top:579px;font-size:11px;font-weight:bold;color:#fff">Option Squash</span>
<span id="mh5" class="t" style="left:1167.200px;top:579px;font-size:11px;font-weight:bold;color:#fff">GID anonyme</span>
<span id="mh6" class="t" style="left:1261.900px;top:579px;font-size:11px;font-weight:bold;color:#fff">UID anony…</span>
<!-- row -->
<div class="a" style="left:742px;top:614px;width:12px;height:12px;background:#fff;border:1px solid #3c3c3c"></div>
<div class="a" style="left:764px;top:608px;width:108px;height:24.500px;border:1px solid #4e4e4e;background:#fff"></div>
<span id="md1" class="t" style="left:776.700px;top:610px;font-size:12px;color:#1e1e1e">172.29.30.0/24</span>
<div class="a" style="left:874.500px;top:608px;width:92px;height:24.500px;border:1px solid #e2e2e2;border-bottom:2px solid #cfcfcf;background:#fff"></div>
<span id="md2" class="t" style="left:886.7px;top:610px;font-size:12px;color:#a8a8a8">sys,</span>
<div class="a" style="left:969px;top:608px;width:44.500px;height:24.500px;border:1.600px solid #1d5fcc;background:#fff;overflow:hidden;box-shadow:0 0 2px rgba(60,120,220,.5)"></div>
<div class="a" style="left:981px;top:614px;width:1px;height:12px;background:#000"></div>
<span id="md3" class="t" style="left:982px;top:610px;font-size:12px;color:#111;width:20.500px;overflow:hidden">lectu</span>
<div class="a" style="left:1013.500px;top:608px;width:23.500px;height:24.500px;border:1.500px solid #111;border-left:none;background:#fff"></div>
<svg style="left:1020px;top:619px" width="8" height="5" viewBox="0 0 8 5"><path d="M0 0h8l-4 4.800z" fill="#3a3a3a"/></svg>
<div class="a" style="left:1039px;top:608px;width:113.500px;height:24.500px;border:1px solid #4e4e4e;background:#fff"></div>
<span id="md4" class="t" style="left:1051.700px;top:610px;font-size:12px;color:#1e1e1e">N'écraser aucu…</span>
<div class="a" style="left:1154px;top:608px;width:93px;height:24.500px;border:1px solid #e2e2e2;border-bottom:2px solid #cfcfcf;background:#fff"></div>
<span id="md5" class="t" style="left:1166.7px;top:610px;font-size:12px;color:#a8a8a8">guest</span>
<div class="a" style="left:1249.500px;top:608px;width:88.500px;height:24.500px;border:1px solid #e2e2e2;border-bottom:2px solid #cfcfcf;background:#fff"></div>
<span id="md6" class="t" style="left:1262.1px;top:610px;font-size:12px;color:#a8a8a8">guest</span>
<!-- note -->
<span id="mn1" class="t" style="left:732.500px;top:638px;font-size:12px;font-weight:bold;color:#1d5a85">Remarque:</span>
<span id="mn2" class="t" style="left:793.500px;top:638px;font-size:12px;color:#1d5a85">Veuillez vous assurer que le format que vous saisissez est correct. Un format incorrect peut conduire a une</span>
<span id="mn3" class="t" style="left:733.2px;top:662px;font-size:12px;color:#1d5a85">erreur d'accès.</span>
<!-- footer buttons -->
<div class="a" style="left:1163px;top:709px;width:110px;height:30px;border:1px solid #2a2a2a;background:#fff"></div>
<span id="mb1" class="t" style="left:1189.400px;top:714px;font-size:14px;color:#1e1e1e">Appliquer</span>
<div class="a" style="left:1281px;top:709px;width:94px;height:30px;border:1px solid #2a2a2a;background:#fff"></div>
<span id="mb2" class="t" style="left:1306.400px;top:714px;font-size:14px;color:#1e1e1e">Fermer</span>

<svg style="left:1110px;top:452px" width="20" height="29" viewBox="0 0 20 29"><path d="M1.500 2.200v22.300l5-4.400 3.700 7.100 4.400-2-2.900-5.700 6.300-.8z" fill="#fff" stroke="#161616" stroke-width="1" stroke-linejoin="miter"/></svg>
</body>
</html>
